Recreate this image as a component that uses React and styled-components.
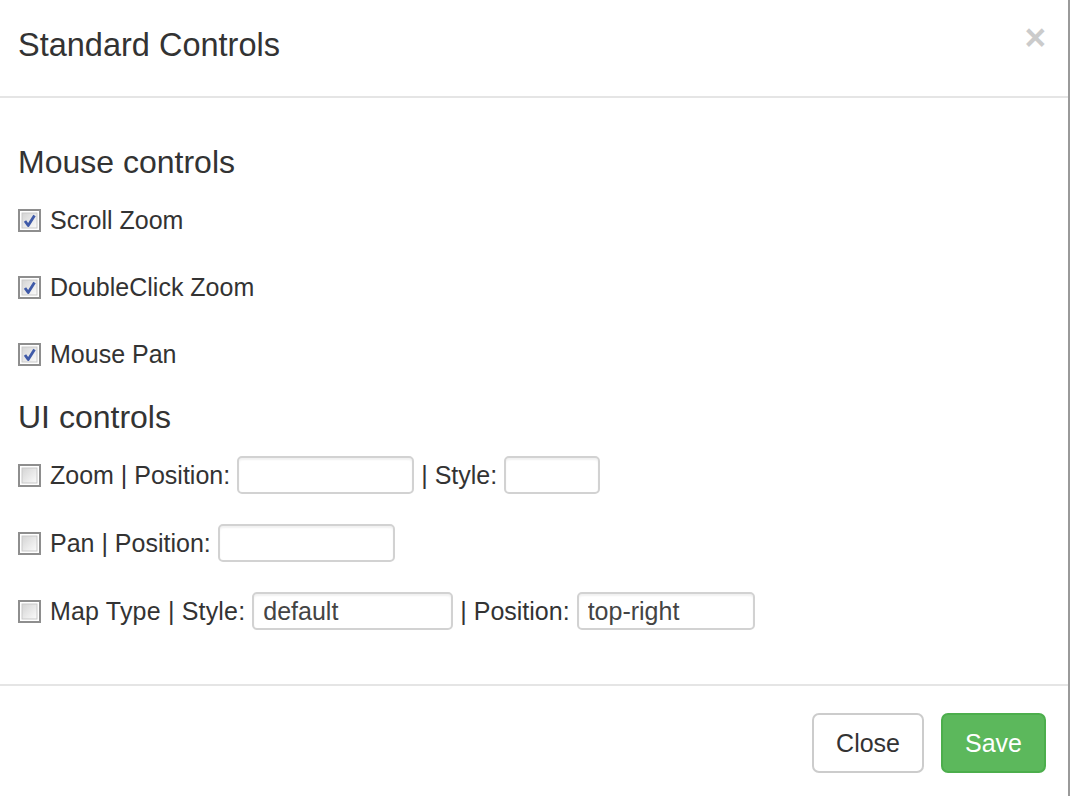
import React from "react";
import styled, { createGlobalStyle } from "styled-components";

const Global = createGlobalStyle`
  html, body { margin: 0; padding: 0; background: #fff; }
  body { font-family: "Liberation Sans", Arial, sans-serif; color: #333; }
  * { box-sizing: border-box; }
`;

const Modal = styled.div`
  width: 1070px;
  height: 796px;
  background: #fff;
  border-right: 2px solid #9a9a9a;
  display: flex;
  flex-direction: column;
  overflow: hidden;
`;

const Header = styled.div`
  height: 98px;
  flex: none;
  display: flex;
  justify-content: space-between;
  align-items: flex-start;
  padding: 0 22px 0 18px;
  border-bottom: 2px solid #e5e5e5;
`;

const Title = styled.h4`
  margin: 27px 0 0;
  font-size: 32.5px;
  line-height: 36px;
  font-weight: normal;
  color: #333;
`;

const CloseX = styled.button`
  margin-top: 19px;
  padding: 0;
  border: 0;
  background: none;
  font-family: "Liberation Sans", Arial, sans-serif;
  font-weight: bold;
  font-size: 37px;
  line-height: 1;
  color: #000;
  opacity: 0.2;
  cursor: pointer;
`;

const Body = styled.div`
  flex: none;
  display: flex;
  flex-direction: column;
  padding: 47px 22px 54px 18px;
  border-bottom: 2px solid #e5e5e5;
`;

const Heading = styled.h4`
  margin: 0 0 22px;
  font-size: 32px;
  line-height: 34px;
  font-weight: normal;
  color: #333;
`;

const OptionList = styled.div`
  display: flex;
  flex-direction: column;
  gap: ${(p) => p.$gap};
  padding-top: ${(p) => p.$before || "0px"};
  margin-bottom: ${(p) => p.$after || "0px"};
`;

const Row = styled.div`
  display: flex;
  align-items: center;
  gap: 7px;
  height: ${(p) => p.$h};
  font-size: 25px;
  line-height: 35px;
  color: #333;
  white-space: nowrap;
`;

const Label = styled.span`
  letter-spacing: ${(p) => p.$spacing || "normal"};
`;

const BoxWrap = styled.span`
  display: inline-flex;
  width: 23px;
  height: 23px;
  margin-right: 2px;
  flex: none;
`;

const TextInput = styled.input`
  width: ${(p) => p.$w};
  height: 38px;
  padding: 0 9px;
  border: 2px solid #d2d2d2;
  border-radius: 5px;
  box-shadow: inset 0 2px 2px rgba(0, 0, 0, 0.06);
  background: #fff;
  font-family: "Liberation Sans", Arial, sans-serif;
  font-size: 25px;
  color: #444;
  outline: none;
`;

const Footer = styled.div`
  display: flex;
  justify-content: flex-end;
  gap: 17px;
  padding: 27px 22px 0 18px;
`;

const Button = styled.button`
  height: 60px;
  padding: 0 22px;
  border-radius: 7px;
  border: 2px solid ${(p) => (p.$primary ? "#4cae4c" : "#cccccc")};
  background: ${(p) => (p.$primary ? "#5cb85c" : "#ffffff")};
  color: ${(p) => (p.$primary ? "#ffffff" : "#333333")};
  font-family: "Liberation Sans", Arial, sans-serif;
  font-size: 25px;
  cursor: pointer;
`;

function CheckBox({ checked }) {
  const id = checked ? "gc" : "gu";
  return (
    <BoxWrap>
      <svg width="23" height="23" viewBox="0 0 23 23">
        <defs>
          <linearGradient id={id} x1="0" y1="0" x2="1" y2="1">
            <stop offset="0" stopColor="#d4d4d4" />
            <stop offset="1" stopColor="#fbfbfb" />
          </linearGradient>
        </defs>
        <rect x="1" y="1" width="21" height="21" fill="#fff" stroke="#8e8e8e" strokeWidth="2" />
        <rect x="4" y="4" width="15" height="15" fill={`url(#${id})`} stroke="#c9c9c9" strokeWidth="1" />
        {checked && (
          <path d="M7 12 L10.2 16.5 L16.5 6.5" fill="none" stroke="#3f5aa8" strokeWidth="2.8" strokeLinejoin="round" />
        )}
      </svg>
    </BoxWrap>
  );
}

export default function App() {
  return (
    <>
      <Global />
      <Modal>
        <Header>
          <Title>Standard Controls</Title>
          <CloseX aria-label="Close">×</CloseX>
        </Header>
        <Body>
          <Heading>Mouse controls</Heading>
          <OptionList $gap="32px" $before="2px" $after="28px">
            <Row $h="35px"><CheckBox checked /><Label>Scroll Zoom</Label></Row>
            <Row $h="35px"><CheckBox checked /><Label>DoubleClick Zoom</Label></Row>
            <Row $h="35px"><CheckBox checked /><Label>Mouse Pan</Label></Row>
          </OptionList>
          <Heading>UI controls</Heading>
          <OptionList $gap="30px">
            <Row $h="38px">
              <CheckBox /><Label>Zoom | Position:</Label>
              <TextInput $w="177px" defaultValue="" />
              <Label>| Style:</Label>
              <TextInput $w="96px" defaultValue="" />
            </Row>
            <Row $h="38px">
              <CheckBox /><Label>Pan | Position:</Label>
              <TextInput $w="177px" defaultValue="" />
            </Row>
            <Row $h="38px">
              <CheckBox /><Label $spacing="0.18px">Map Type | Style:</Label>
              <TextInput $w="201px" defaultValue="default" />
              <Label>| Position:</Label>
              <TextInput $w="178px" defaultValue="top-right" />
            </Row>
          </OptionList>
        </Body>
        <Footer>
          <Button>Close</Button>
          <Button $primary>Save</Button>
        </Footer>
      </Modal>
    </>
  );
}
